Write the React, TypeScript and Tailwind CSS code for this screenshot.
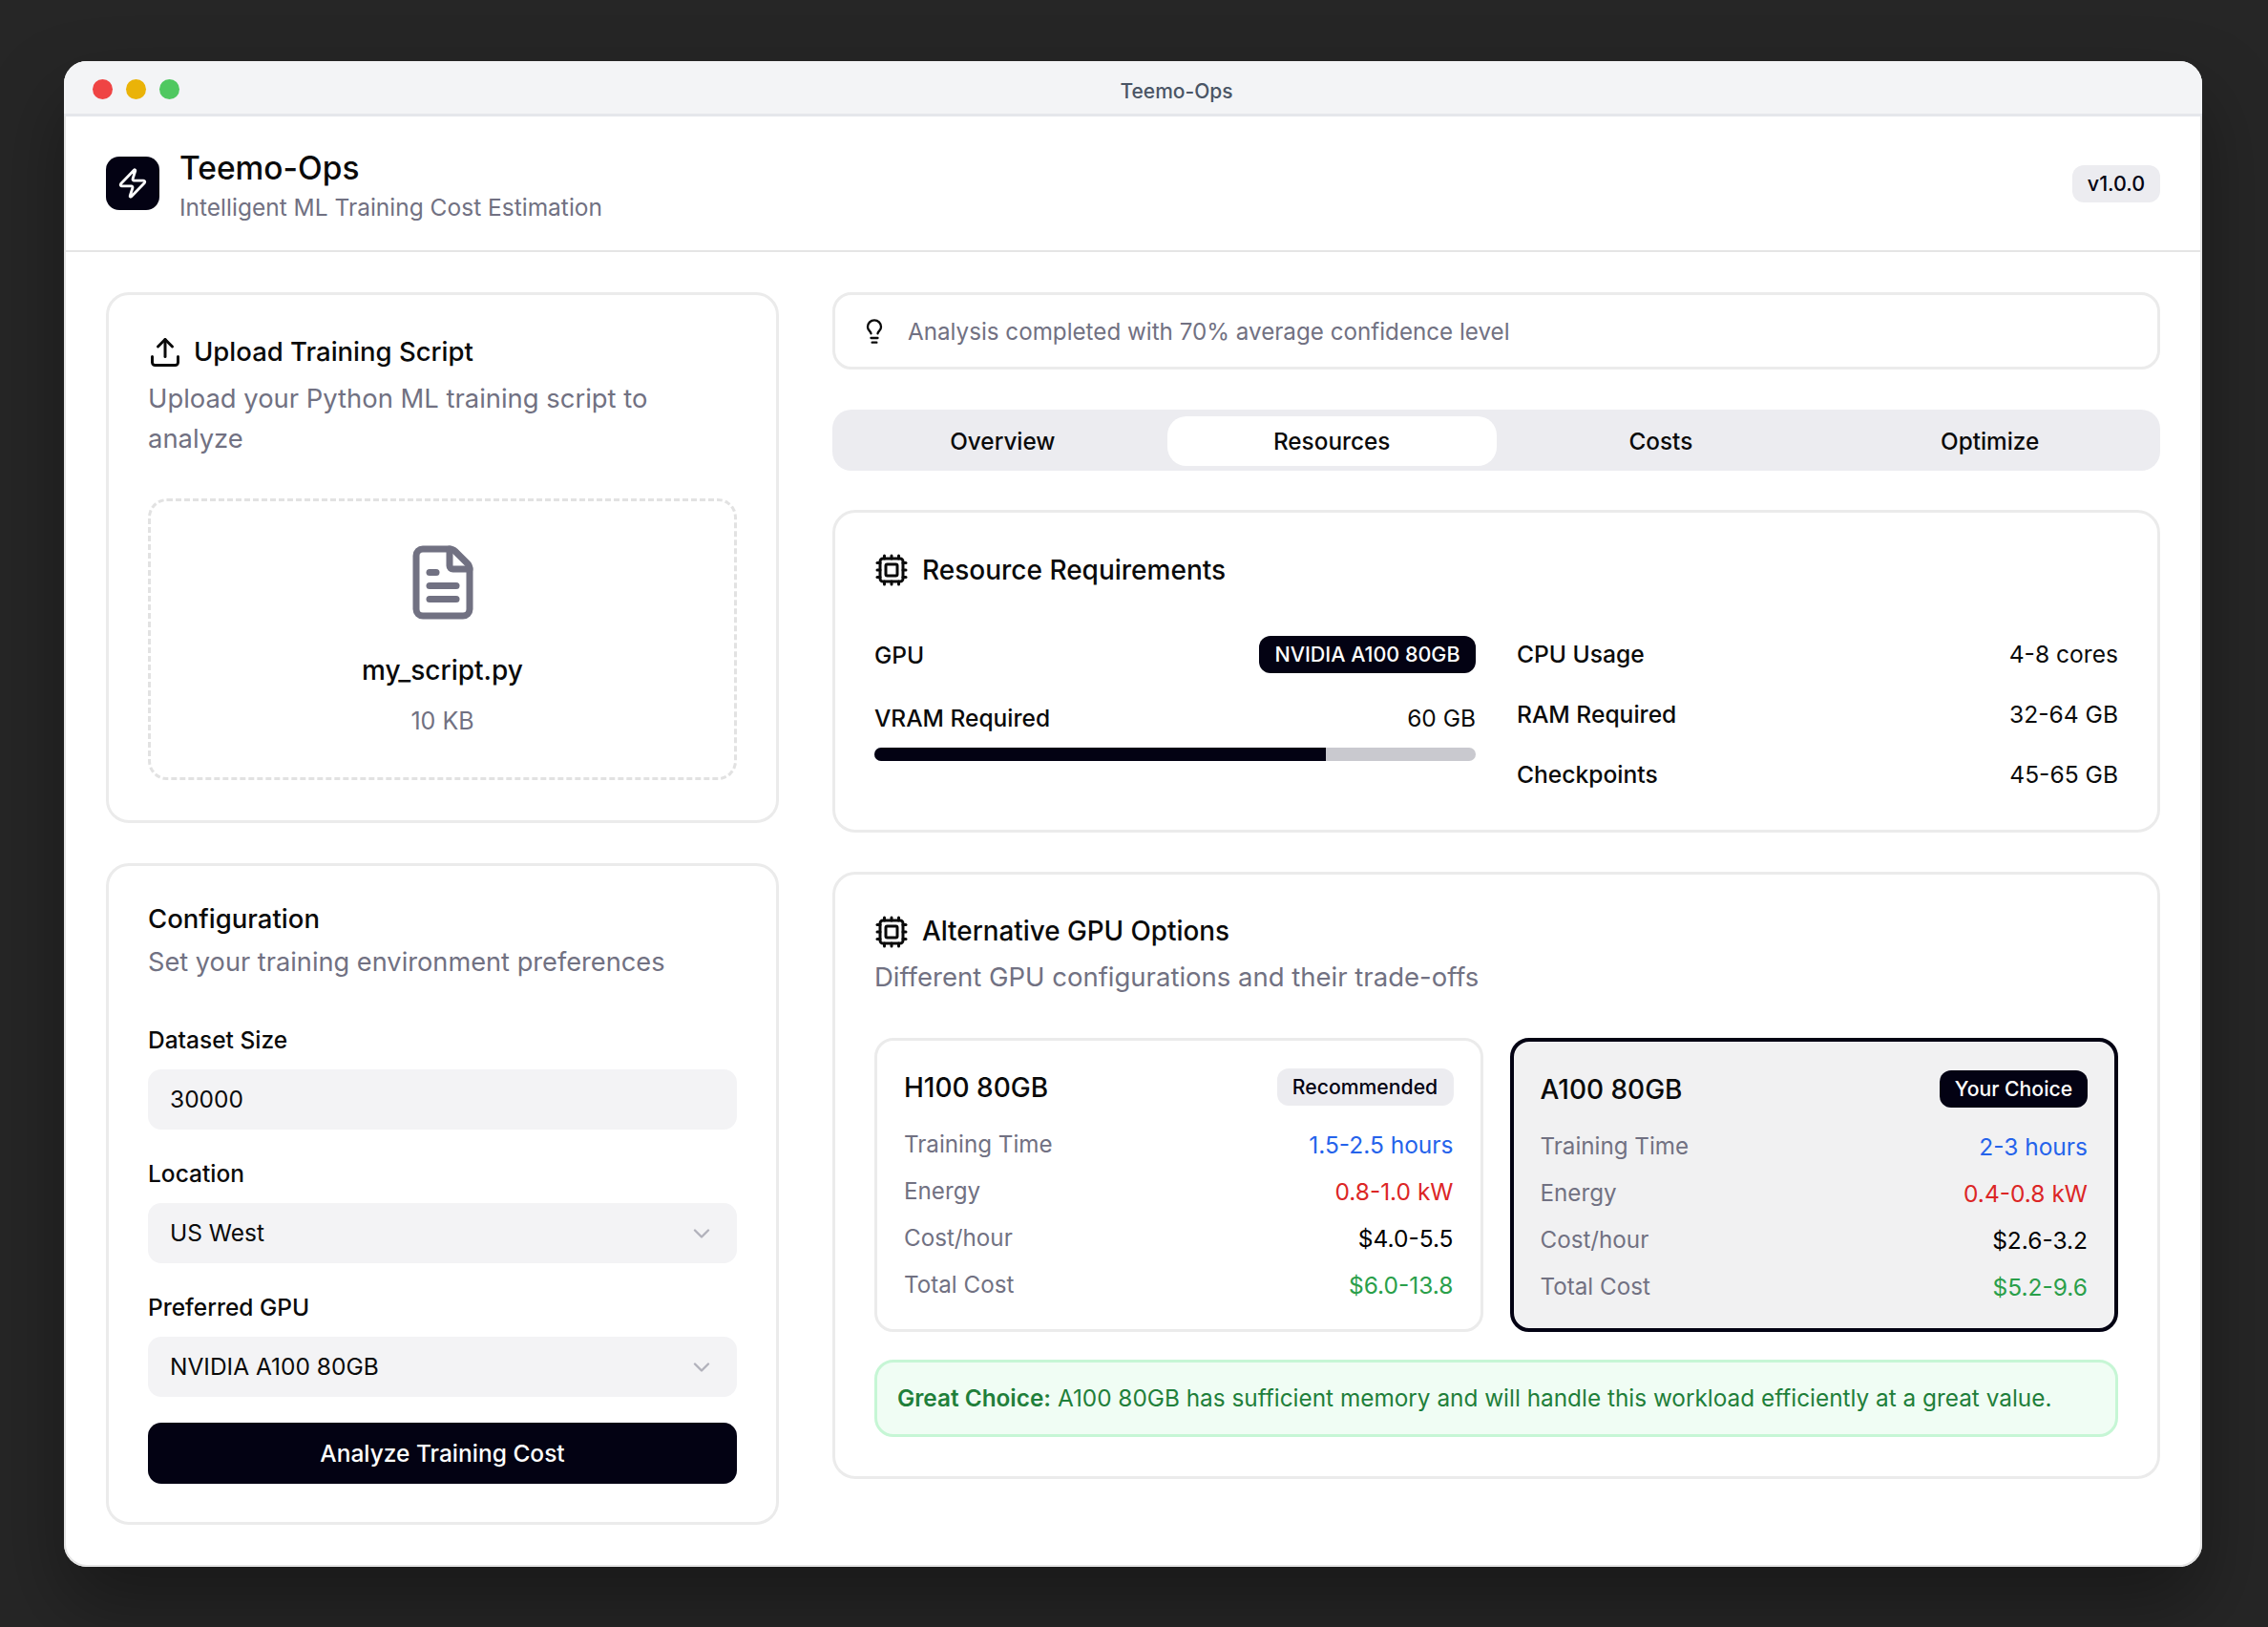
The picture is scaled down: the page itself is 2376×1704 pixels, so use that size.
import { ChevronDown, Cpu, FileText, Lightbulb, Upload, Zap } from 'lucide-react';

type GpuRow = { label: string; value: string; color: string };

const tabs = ['Overview', 'Resources', 'Costs', 'Optimize'];

const h100Rows: GpuRow[] = [
  { label: 'Training Time', value: '1.5-2.5 hours', color: 'text-[#2563eb]' },
  { label: 'Energy', value: '0.8-1.0 kW', color: 'text-[#dc2626]' },
  { label: 'Cost/hour', value: '$4.0-5.5', color: 'text-black' },
  { label: 'Total Cost', value: '$6.0-13.8', color: 'text-[#2a9f4a]' },
];

const a100Rows: GpuRow[] = [
  { label: 'Training Time', value: '2-3 hours', color: 'text-[#2563eb]' },
  { label: 'Energy', value: '0.4-0.8 kW', color: 'text-[#dc2626]' },
  { label: 'Cost/hour', value: '$2.6-3.2', color: 'text-black' },
  { label: 'Total Cost', value: '$5.2-9.6', color: 'text-[#2a9f4a]' },
];

const specs = [
  { label: 'CPU Usage', value: '4-8 cores' },
  { label: 'RAM Required', value: '32-64 GB' },
  { label: 'Checkpoints', value: '45-65 GB' },
];

function Rows({ rows }: { rows: GpuRow[] }) {
  return (
    <div className="mt-[23px] flex flex-col gap-3">
      {rows.map((row) => (
        <div key={row.label} className="flex h-[37px] items-center justify-between text-[24.5px]">
          <span className="text-[24.2px] text-[#717182]">{row.label}</span>
          <span className={row.color}>{row.value}</span>
        </div>
      ))}
    </div>
  );
}

function Field({ label, value, select }: { label: string; value: string; select?: boolean }) {
  return (
    <div>
      <div className="flex h-[34px] items-center text-[24.5px] font-medium text-[#0a0a0a]">{label}</div>
      <div className="mt-[14px] flex h-[63px] items-center justify-between rounded-[14px] bg-[#f3f3f5] pl-[23px] pr-[23px] text-[24.5px] text-[#0a0a0a]">
        <span>{value}</span>
        {select && <ChevronDown size={28} strokeWidth={2} className="text-[#717182] opacity-50" />}
      </div>
    </div>
  );
}

export default function App() {
  return (
    <div className="h-[1704px] w-[2376px] overflow-hidden bg-[#262626] pl-[67px] pt-16 font-['Inter',sans-serif]">
      <div className="flex h-[1577px] w-[2240px] flex-col overflow-hidden rounded-[24px] bg-white shadow-[inset_0_0_0_2px_#e5e5e5,0_40px_80px_rgba(0,0,0,0.35)]">
        {/* title bar */}
        <div className="flex h-[58px] shrink-0 items-center border-b-[3px] border-[#e5e7eb] bg-[#f3f4f6] pl-[30px] pr-[30px] pt-[3px]">
          <div className="flex gap-[14px]">
            <div className="h-[21px] w-[21px] rounded-full bg-[#ef4444]" />
            <div className="h-[21px] w-[21px] rounded-full bg-[#eab308]" />
            <div className="h-[21px] w-[21px] rounded-full bg-[#4fc860]" />
          </div>
          <div className="flex-1 pt-[5px] text-center text-[21px] font-medium text-[#4a5565]">Teemo-Ops</div>
        </div>

        {/* header */}
        <div className="flex h-[142px] shrink-0 items-center justify-between border-b-[2px] border-[#e5e5e5] px-11">
          <div className="flex items-center gap-[21px]">
            <div className="flex h-14 w-14 items-center justify-center rounded-[14px] bg-[#030213]">
              <Zap size={34} strokeWidth={2} className="text-white" />
            </div>
            <div className="pt-[5px]">
              <div className="text-[33.5px] leading-[44px] font-medium text-[#0a0a0a]">Teemo-Ops</div>
              <div className="text-[24.5px] leading-[38px] text-[#717182]">Intelligent ML Training Cost Estimation</div>
            </div>
          </div>
          <div className="flex h-[39px] w-[92px] items-center justify-center rounded-[12px] bg-[#ececf0] text-[21.5px] font-medium text-[#030213]">
            v1.0.0
          </div>
        </div>

        {/* body */}
        <div className="flex flex-1 gap-14 px-11 pt-[42px]">
          <div className="flex w-[705px] shrink-0 flex-col gap-[42px]">
            <div className="h-[556px] rounded-[24px] border-[3px] border-[#ebebeb] px-[41px] pt-[42px]">
              <div className="flex h-[36px] items-center gap-3 text-[27.5px] font-medium text-[#0a0a0a]">
                <Upload size={36} strokeWidth={2} />
                <span>Upload Training Script</span>
              </div>
              <div className="mt-[9px] text-[27.4px] leading-[42px] text-[#717182]">
                Upload your Python ML training script to analyze
              </div>
              <div className="mt-[42px] flex h-[295px] flex-col items-center rounded-[20px] border-[3px] border-dashed border-[#e2e2e2] pt-[43px]">
                <FileText size={84} strokeWidth={2} className="text-[#717182]" />
                <div className="mt-[31px] text-[28px] leading-[38px] font-medium text-[#0a0a0a]">my_script.py</div>
                <div className="mt-[16px] text-[25px] leading-[36px] text-[#717182]">10 KB</div>
              </div>
            </div>

            <div className="h-[693px] rounded-[24px] border-[3px] border-[#ebebeb] px-[41px] pt-[38px]">
              <div className="flex h-[36px] items-center text-[27.5px] font-medium text-[#0a0a0a]">Configuration</div>
              <div className="mt-[8px] text-[27.2px] leading-[38px] text-[#717182]">Set your training environment preferences</div>
              <div className="mt-[45px] flex flex-col gap-[29px]">
                <Field label="Dataset Size" value="30000" />
                <Field label="Location" value="US West" select />
                <Field label="Preferred GPU" value="NVIDIA A100 80GB" select />
              </div>
              <div className="mt-[27px] flex h-[64px] items-center justify-center rounded-[14px] bg-[#030213] text-[24.5px] font-medium text-white">
                Analyze Training Cost
              </div>
            </div>
          </div>

          <div className="flex min-w-0 flex-1 flex-col gap-[41px]">
            <div className="flex h-[81px] items-center gap-[20px] rounded-[20px] border-[3px] border-[#ebebeb] pl-[27px] text-[24.2px] text-[#717182]">
              <Lightbulb size={28} strokeWidth={2} className="text-[#0a0a0a]" />
              <span className="pl-[1px] pt-[3px]">Analysis completed with 70% average confidence level</span>
            </div>

            <div className="mt-[1px] grid h-[64px] grid-cols-4 rounded-[20px] bg-[#ececf0] px-[6px] pb-[5px] pt-[7px]">
              {tabs.map((tab) => (
                <div
                  key={tab}
                  className={
                    tab === 'Resources'
                      ? 'flex items-center justify-center rounded-[20px] bg-white pt-[1px] text-[24.3px] font-medium text-[#0a0a0a]'
                      : 'flex items-center justify-center pt-[1px] text-[24.3px] font-medium text-[#0a0a0a]'
                  }
                >
                  {tab}
                </div>
              ))}
            </div>

            <div className="h-[338px] rounded-[24px] border-[3px] border-[#ebebeb] px-[41px] pt-[42px]">
              <div className="flex h-[36px] items-center gap-[14px] text-[28px] font-medium text-[#0a0a0a]">
                <Cpu size={36} strokeWidth={2} />
                <span>Resource Requirements</span>
              </div>
              <div className="mt-[51px] grid grid-cols-2 gap-[43px]">
                <div>
                  <div className="flex h-[39px] items-center justify-between text-[24.5px] font-medium text-[#0a0a0a]">
                    <span className="pt-[2px]">GPU</span>
                    <span className="flex h-[39px] w-[227px] items-center justify-center rounded-[12px] bg-[#030213] text-[21.5px] font-medium text-white">
                      NVIDIA A100 80GB
                    </span>
                  </div>
                  <div className="mt-[28px] flex h-[38px] items-center justify-between text-[24.5px] text-[#0a0a0a]">
                    <span className="font-medium">VRAM Required</span>
                    <span>60 GB</span>
                  </div>
                  <div className="mt-3 h-[14px] overflow-hidden rounded-full bg-[#c9c9cf]">
                    <div className="h-full bg-[#030213]" style={{ width: '75%' }} />
                  </div>
                </div>
                <div className="flex flex-col gap-[25px]">
                  {specs.map((spec) => (
                    <div key={spec.label} className="flex h-[38px] items-center justify-between text-[24.6px] text-[#0a0a0a]">
                      <span className="font-medium">{spec.label}</span>
                      <span>{spec.value}</span>
                    </div>
                  ))}
                </div>
              </div>
            </div>

            <div className="h-[636px] rounded-[24px] border-[3px] border-[#ebebeb] px-[41px] pt-[42px]">
              <div className="flex h-[36px] items-center gap-[14px] text-[27.8px] font-medium text-[#0a0a0a]">
                <Cpu size={36} strokeWidth={2} />
                <span>Alternative GPU Options</span>
              </div>
              <div className="mt-[10px] text-[27.5px] leading-[38px] text-[#717182]">Different GPU configurations and their trade-offs</div>
              <div className="mt-[45px] grid grid-cols-2 gap-[28px]">
                <div className="h-[308px] rounded-[20px] border-[3px] border-[#ebebeb] px-7 pt-[29px]">
                  <div className="flex h-[39px] items-center justify-between">
                    <span className="text-[28px] font-medium text-[#0a0a0a]">H100 80GB</span>
                    <span className="flex h-[39px] w-[185px] items-center justify-center rounded-[12px] bg-[#ececf0] text-[21.2px] font-medium text-[#030213]">
                      Recommended
                    </span>
                  </div>
                  <Rows rows={h100Rows} />
                </div>
                <div className="h-[308px] rounded-[20px] border-[4px] border-[#030213] bg-[#f1f1f2] px-7 pt-[30px]">
                  <div className="flex h-[39px] items-center justify-between">
                    <span className="text-[28px] font-medium text-[#0a0a0a]">A100 80GB</span>
                    <span className="flex h-[39px] w-[155px] items-center justify-center rounded-[12px] bg-[#030213] text-[21.2px] font-medium text-white">
                      Your Choice
                    </span>
                  </div>
                  <Rows rows={a100Rows} />
                </div>
              </div>
              <div className="mt-[29px] flex h-[81px] items-center rounded-[20px] border-[3px] border-[#c6f6d5] bg-[#f0fdf4] pl-[21px] text-[24.35px] text-[#1f7f3a]">
                <span>
                  <span className="font-semibold">Great Choice:</span> A100 80GB has sufficient memory and will handle this workload efficiently at a great value.
                </span>
              </div>
            </div>
          </div>
        </div>
      </div>
    </div>
  );
}
